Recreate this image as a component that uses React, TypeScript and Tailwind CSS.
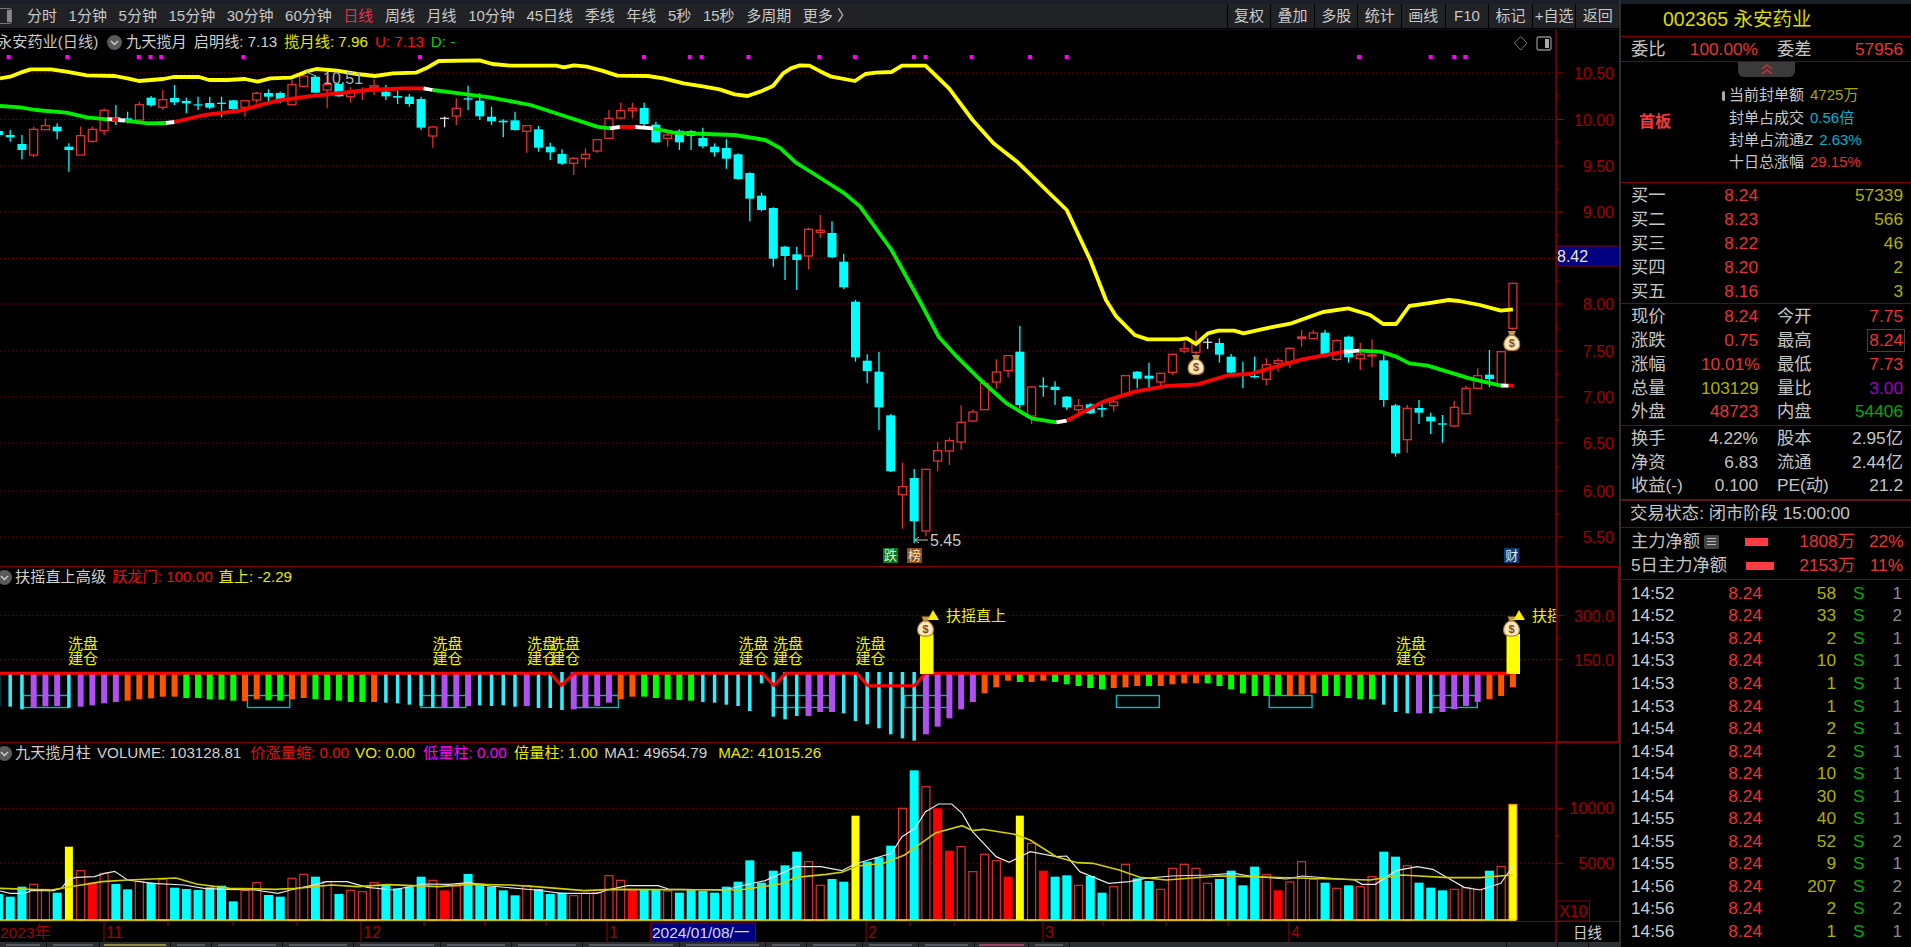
import React from 'react';

type Pt = [number, number];

// candle + volume data read off the chart: body top, body bottom, wick top, wick bottom (3x px), volume top (3x px)
const CANDLES: [string, number, number, number, number, number][] = [
  ['d', 393, 405, 385, 410, 462], ['d', 405, 412, 390, 425, 470], ['d', 432, 450, 405, 478, 440], ['u', 388, 465, 380, 472, 433],
  ['u', 377, 389, 355, 390, 448], ['d', 380, 394, 370, 418, 458], ['d', 440, 450, 430, 515, 320], ['u', 407, 465, 380, 465, 392],
  ['u', 388, 424, 380, 428, 428], ['u', 331, 392, 325, 405, 400], ['d', 352, 365, 315, 375, 432], ['d', 355, 360, 335, 370, 448],
  ['u', 314, 360, 305, 360, 425], ['d', 293, 316, 288, 320, 428], ['u', 299, 322, 270, 330, 418], ['d', 294, 307, 255, 315, 443],
  ['d', 303, 310, 293, 340, 447], ['d', 313, 316, 290, 330, 450], ['d', 309, 323, 290, 328, 442], ['d', 308, 312, 290, 352, 437],
  ['d', 301, 327, 300, 330, 484], ['u', 302, 322, 300, 350, 452], ['u', 280, 300, 275, 310, 428], ['d', 279, 290, 268, 305, 465],
  ['d', 279, 298, 275, 310, 470], ['u', 254, 314, 240, 315, 415], ['u', 228, 259, 215, 262, 403], ['d', 230, 278, 225, 280, 410],
  ['u', 254, 270, 225, 325, 425], ['d', 252, 289, 250, 290, 462], ['u', 275, 290, 262, 308, 451], ['u', 270, 273, 262, 300, 455],
  ['u', 257, 262, 238, 285, 428], ['d', 275, 289, 255, 300, 433], ['d', 288, 293, 272, 312, 445], ['d', 290, 312, 282, 320, 440],
  ['d', 297, 383, 290, 390, 410], ['u', 381, 408, 378, 443, 421], ['w', 353, 355, 350, 382, 451], ['u', 325, 348, 295, 375, 438],
  ['d', 295, 299, 257, 330, 402], ['d', 302, 349, 280, 360, 430], ['d', 350, 364, 320, 375, 440], ['d', 362, 367, 358, 412, 451],
  ['d', 361, 390, 335, 392, 466], ['u', 377, 394, 375, 458, 437], ['d', 388, 443, 378, 455, 447], ['d', 440, 457, 428, 480, 462],
  ['d', 462, 491, 448, 495, 458], ['u', 475, 490, 472, 525, 467], ['u', 463, 475, 445, 503, 460], ['u', 419, 453, 418, 458, 458],
  ['u', 355, 415, 330, 418, 407], ['u', 332, 354, 308, 358, 421], ['u', 325, 332, 308, 355, 448], ['d', 324, 372, 308, 378, 448],
  ['d', 374, 427, 365, 428, 448], ['u', 405, 415, 395, 440, 453], ['d', 392, 427, 388, 450, 458], ['d', 393, 408, 390, 450, 448],
  ['d', 414, 439, 383, 445, 453], ['d', 440, 457, 430, 470, 458], ['d', 444, 476, 418, 506, 440], ['d', 463, 537, 460, 540, 425],
  ['d', 519, 596, 517, 664, 361], ['d', 587, 630, 578, 634, 428], ['d', 624, 776, 622, 800, 392], ['d', 740, 768, 737, 840, 376],
  ['d', 763, 780, 740, 870, 335], ['u', 688, 768, 683, 808, 365], ['u', 691, 697, 645, 713, 436], ['d', 699, 772, 664, 775, 417],
  ['d', 785, 862, 762, 868, 425], ['d', 905, 1072, 900, 1085, 227], ['d', 1082, 1113, 1063, 1150, 365], ['d', 1115, 1222, 1055, 1290, 352],
  ['d', 1246, 1414, 1242, 1416, 317], ['u', 1460, 1484, 1388, 1586, 205], ['d', 1434, 1564, 1407, 1630, 91], ['u', 1408, 1593, 1408, 1608, 140],
  ['u', 1352, 1383, 1325, 1413, 205], ['u', 1322, 1353, 1313, 1395, 332], ['u', 1267, 1326, 1216, 1350, 320], ['u', 1236, 1263, 1228, 1267, 395],
  ['u', 1150, 1229, 1140, 1229, 343], ['u', 1116, 1146, 1078, 1166, 362], ['u', 1067, 1112, 1065, 1132, 410], ['d', 1055, 1215, 978, 1225, 227],
  ['u', 1161, 1248, 1158, 1272, 310], ['d', 1157, 1159, 1132, 1190, 392], ['d', 1160, 1170, 1144, 1215, 410], ['d', 1190, 1222, 1188, 1230, 406],
  ['u', 1217, 1229, 1197, 1240, 436], ['d', 1213, 1240, 1210, 1242, 408], ['d', 1224, 1229, 1212, 1252, 458], ['u', 1206, 1217, 1195, 1235, 440],
  ['u', 1127, 1185, 1125, 1190, 373], ['d', 1115, 1136, 1113, 1165, 415], ['d', 1127, 1136, 1088, 1165, 423], ['u', 1120, 1146, 1118, 1165, 448],
  ['u', 1063, 1117, 1060, 1125, 385], ['u', 1046, 1053, 1025, 1060, 373], ['u', 1030, 1057, 992, 1065, 385], ['w', 1025, 1027, 1015, 1047, 430],
  ['d', 1029, 1064, 1015, 1088, 417], ['d', 1070, 1118, 1062, 1125, 392], ['d', 1120, 1122, 1085, 1165, 436], ['d', 1128, 1132, 1070, 1135, 380],
  ['u', 1094, 1138, 1075, 1155, 404], ['u', 1082, 1090, 1075, 1115, 451], ['u', 1045, 1085, 1042, 1105, 426], ['u', 1011, 1015, 990, 1040, 365],
  ['u', 999, 1016, 990, 1018, 418], ['d', 998, 1065, 990, 1072, 428], ['u', 1022, 1078, 1018, 1082, 445], ['d', 1010, 1072, 1007, 1088, 436],
  ['u', 1063, 1076, 1028, 1110, 440], ['u', 1065, 1068, 1018, 1102, 410], ['d', 1081, 1200, 1065, 1220, 335], ['d', 1216, 1360, 1212, 1370, 350],
  ['u', 1225, 1319, 1215, 1358, 377], ['d', 1224, 1238, 1200, 1272, 428], ['d', 1250, 1264, 1238, 1302, 443], ['d', 1270, 1274, 1245, 1328, 451],
  ['u', 1222, 1278, 1202, 1280, 448], ['u', 1165, 1241, 1158, 1242, 443], ['u', 1127, 1165, 1105, 1167, 448], ['d', 1124, 1137, 1050, 1162, 392],
  ['u', 1055, 1152, 1055, 1158, 380], ['u', 850, 985, 848, 990, 193],
];

const SOLID_VOL = [8, 38, 54, 80, 81, 86, 89, 109];
const YELLOW_VOL = [6, 73, 87, 129];

// indicator bars: c cyan, p purple, o orange, g green, value is bar bottom in 3x px
const BARS: [string, number][] = [
  ['c', 440], ['c', 442], ['c', 450], ['p', 446], ['p', 441], ['p', 440], ['c', 445], ['p', 442], ['p', 438], ['p', 432], ['p', 428],
  ['o', 424], ['o', 420], ['o', 417], ['o', 412], ['o', 412], ['g', 416], ['g', 416], ['g', 420], ['g', 421], ['g', 424], ['o', 425],
  ['o', 420], ['g', 423], ['g', 424], ['o', 420], ['o', 416], ['g', 420], ['g', 422], ['g', 424], ['g', 428], ['g', 428], ['o', 428],
  ['c', 430], ['c', 432], ['c', 436], ['c', 440], ['c', 445], ['p', 446], ['p', 443], ['p', 440], ['c', 438], ['c', 440], ['c', 438],
  ['c', 442], ['p', 440], ['c', 446], ['c', 446], ['c', 452], ['p', 450], ['p', 446], ['p', 440], ['p', 430], ['o', 420], ['o', 412],
  ['g', 412], ['g', 416], ['g', 420], ['g', 422], ['g', 424], ['c', 428], ['c', 430], ['c', 436], ['c', 440], ['c', 455], ['c', 372],
  ['c', 472], ['c', 480], ['c', 470], ['p', 470], ['p', 458], ['p', 458], ['c', 462], ['c', 485], ['c', 495], ['c', 507], ['c', 525],
  ['c', 537], ['c', 544], ['p', 525], ['p', 502], ['p', 477], ['p', 450], ['p', 428], ['o', 402], ['o', 384], ['o', 364], ['g', 368],
  ['o', 368], ['o', 364], ['g', 368], ['g', 375], ['g', 380], ['g', 386], ['g', 390], ['o', 386], ['o', 384], ['o', 380], ['g', 380],
  ['o', 380], ['o', 375], ['o', 372], ['o', 372], ['g', 372], ['g', 380], ['g', 390], ['g', 402], ['g', 410], ['g', 410], ['g', 408],
  ['o', 408], ['o', 406], ['o', 402], ['g', 410], ['g', 410], ['g', 416], ['g', 420], ['g', 420], ['c', 436], ['c', 458], ['c', 462],
  ['p', 462], ['c', 462], ['p', 458], ['p', 450], ['p', 440], ['p', 428], ['o', 420], ['o', 410], ['o', 384],
];

const BAR_STYLE: Record<string, [string, number]> = {
  c: ['#33eeff', 3.5],
  p: ['#b050f0', 6],
  o: ['#ff5500', 6],
  g: ['#00ff00', 6],
};

const xOf = (i: number) => 10.2 + 11.74 * (i - 1);
const c1 = (pts: Pt[], top = 0): Pt[] => pts.map(([x, y]) => [x / 1.96, top + y / 3]);
const c2 = (pts: Pt[], top = 0): Pt[] => pts.map(([x, y]) => [800 + x / 1.912, top + y / 3]);
const poly = (pts: Pt[]) => pts.map(p => p.join(',')).join(' ');

const YELLOW_LINE: Pt[] = [
  ...c1([[0, 235], [20, 230], [40, 218], [60, 208], [100, 208], [130, 215], [170, 226], [225, 228], [250, 235], [272, 243], [320, 237], [340, 231], [390, 231], [410, 240], [445, 240], [480, 237], [505, 245], [530, 235], [570, 233], [600, 215], [620, 207], [660, 212], [700, 222], [735, 228], [770, 220], [815, 218], [835, 205], [860, 183], [940, 181], [965, 192], [1000, 197], [1090, 197], [1105, 202], [1125, 196], [1150, 200], [1180, 212], [1210, 227], [1270, 228], [1300, 235], [1340, 250], [1380, 260], [1410, 268], [1440, 283], [1465, 288], [1490, 275], [1515, 258], [1535, 220], [1550, 205], [1568, 196]]),
  ...c2([[18, 197], [40, 215], [60, 230], [105, 243], [125, 222], [145, 218], [175, 216], [195, 197], [240, 197], [285, 265], [330, 360], [370, 430], [415, 485], [510, 630], [555, 780], [585, 900]]),
  ...c2([[605, 50], [640, 105], [665, 118], [725, 118], [740, 115], [757, 132], [780, 100], [800, 92], [830, 92], [848, 100], [900, 82], [940, 70], [1000, 36], [1048, 25], [1090, 45], [1115, 72], [1140, 72], [1165, 18], [1200, 10], [1240, 0], [1260, 3], [1300, 15], [1340, 32], [1363, 28]], 300),
];

const MID_LINE: [string, Pt[]][] = [
  ['#00ee00', c1([[0, 318], [40, 322], [70, 330], [130, 338], [170, 352], [210, 358]])],
  ['#ffffff', c1([[210, 358], [220, 358]])],
  ['#ff0000', c1([[220, 358], [232, 360]])],
  ['#ffffff', c1([[232, 360], [245, 362]])],
  ['#00ee00', c1([[245, 362], [290, 370], [325, 369]])],
  ['#ffffff', c1([[325, 369], [342, 366]])],
  ['#ff0000', c1([[342, 366], [400, 345], [470, 332], [540, 303], [600, 290], [660, 280], [720, 270], [790, 265], [830, 265]])],
  ['#ffffff', c1([[830, 265], [848, 270]])],
  ['#00ee00', c1([[848, 270], [900, 280], [960, 292], [1040, 315], [1100, 345], [1170, 380], [1195, 385]])],
  ['#ffffff', c1([[1195, 385], [1215, 381]])],
  ['#ff0000', c1([[1215, 381], [1245, 381]])],
  ['#ffffff', c1([[1245, 381], [1280, 385]])],
  ['#00ee00', [...c1([[1280, 385], [1320, 398], [1380, 402], [1440, 405], [1500, 420], [1530, 445], [1560, 488]]), ...c2([[15, 510], [60, 555], [85, 580], [115, 620], [175, 750], [228, 900]]), ...c2([[265, 110], [300, 170], [345, 240], [395, 310], [443, 355], [490, 367]], 300)]],
  ['#ffffff', c2([[490, 367], [510, 362]], 300)],
  ['#ff0000', c2([[510, 362], [580, 305], [640, 275], [700, 258], [760, 253], [820, 225], [860, 222], [960, 178], [1040, 155]], 300)],
  ['#ffffff', c2([[1040, 155], [1070, 152]], 300)],
  ['#00ee00', c2([[1070, 152], [1110, 155], [1140, 170], [1165, 190], [1200, 197], [1280, 235], [1340, 257]], 300)],
  ['#ffffff', c2([[1340, 257], [1355, 257]], 300)],
  ['#ff0000', c2([[1355, 257], [1365, 257]], 300)],
];

const VOL_WHITE: Pt[] = [
  ...c1([[0, 453], [20, 460], [50, 460], [60, 452], [105, 452], [120, 445], [135, 418], [150, 412], [185, 410], [205, 400], [225, 394], [250, 420], [300, 430], [360, 435], [400, 445], [440, 448], [500, 450], [545, 460], [570, 450], [620, 433], [640, 425], [680, 425], [720, 442], [770, 450], [830, 432], [880, 433], [920, 428], [960, 438], [1050, 450], [1100, 460], [1170, 460], [1190, 450], [1230, 437], [1290, 437], [1310, 447], [1420, 450], [1460, 435], [1500, 422], [1560, 380]], 740),
  ...c2([[40, 380], [80, 392], [105, 372], [175, 340], [195, 290], [220, 265], [240, 215], [265, 192], [290, 192], [310, 220], [330, 275], [375, 350], [400, 367], [440, 335], [490, 350], [510, 348], [535, 395], [590, 430], [630, 425], [660, 415], [710, 408], [780, 405], [830, 400], [860, 408], [930, 417], [960, 408], [1060, 420], [1075, 433], [1100, 433], [1140, 392], [1180, 380], [1210, 388], [1270, 442], [1300, 450], [1340, 430], [1363, 378]], 740),
];

const VOL_YELLOW: Pt[] = [
  ...c1([[0, 445], [100, 450], [150, 437], [200, 425], [250, 420], [345, 414], [385, 432], [450, 445], [540, 448], [580, 445], [650, 435], [700, 440], [760, 434], [860, 440], [920, 433], [1000, 435], [1050, 440], [1145, 452], [1200, 448], [1450, 450], [1530, 432], [1560, 412]], 740),
  ...c2([[50, 403], [80, 397], [110, 378], [160, 370], [200, 345], [260, 278], [310, 257], [330, 272], [350, 268], [410, 283], [440, 300], [490, 350], [530, 368], [560, 370], [610, 390], [650, 412], [700, 420], [800, 408], [860, 410], [1090, 420], [1150, 405], [1240, 413], [1300, 413], [1363, 405]], 740),
];

const RED_TOP: Pt[] = [
  ...c1([[0, 340], [1078, 340], [1100, 376], [1125, 340], [1493, 340], [1517, 376], [1540, 340]], 560),
  ...c2([[108, 340], [130, 377], [218, 377], [240, 340], [1363, 340]], 560),
];

const DOTS = [...[17, 132, 272, 295, 316, 477, 823, 1262, 1352, 1375, 1467].map(x => x / 1.96), ...[37, 105, 218, 240, 328, 440, 510, 1069, 1206, 1251, 1272].map(x => 800 + x / 1.912)];
const TEAL_BOXES = [...[[45, 135], [485, 568], [825, 913], [1128, 1212], [1517, 1632]].map(([a, b]) => [a / 1.96, b / 1.96]), ...[[200, 283], [605, 687], [897, 979], [1208, 1295]].map(([a, b]) => [800 + a / 1.912, 800 + b / 1.912])];
const WASH_X = [83, 447.5, 542, 565, 753.6, 788, 870.6, 1411];
const PRICE_LABELS: [string, number][] = [['10.50', 73], ['10.00', 119.5], ['9.50', 166], ['9.00', 212], ['8.00', 304], ['7.50', 351], ['7.00', 397], ['6.50', 443], ['6.00', 491], ['5.50', 537]];

const AXIS = '#a00000';
const GRID = '#7a0000';
const BODY = "[font-family:'Liberation_Sans','Noto_Sans_CJK_SC',sans-serif]";

function MoneyBag({ x, y }: { x: number; y: number }) {
  return (
    <g transform={`translate(${x} ${y})`}>
      <path d="M-4 -10 L4 -10 L2 -5.5 L-2 -5.5 Z" fill="#c89a40" />
      <path d="M-2.5 -5.5 C-8 -2 -8.5 3 -7.5 6 C-6.5 9 -3 9.5 0 9.5 C3 9.5 6.5 9 7.5 6 C8.5 3 8 -2 2.5 -5.5 Z" fill="#f8e6bc" stroke="#b07a28" strokeWidth="1.2" />
      <text x="0" y="6" textAnchor="middle" fontSize="11" fontWeight="700" fill="#8a4a10">$</text>
    </g>
  );
}

function GridLines({ ys }: { ys: number[] }) {
  return (
    <>
      {ys.map(y => <line key={y} x1="0" x2="1556" y1={y} y2={y} stroke={GRID} strokeWidth="1" strokeDasharray="1.5 2.5" />)}
    </>
  );
}

function AxisLabels({ items }: { items: [string, number][] }) {
  return (
    <>
      {items.map(([t, y]) => (
        <g key={t}>
          <line x1="1556" x2="1563" y1={y} y2={y} stroke={AXIS} />
          <text x="1614" y={y + 6} textAnchor="end" fontSize="16" fill={AXIS}>{t}</text>
        </g>
      ))}
    </>
  );
}

function Chevron() {
  return (
    <span className="flex h-[15px] w-[15px] flex-none items-center justify-center rounded-full bg-[#5a5a5a]">
      <svg width="9" height="9" viewBox="0 0 9 9"><path d="M1 3 L4.5 6.5 L8 3" fill="none" stroke="#d0d0d0" strokeWidth="1.4" /></svg>
    </span>
  );
}

function PricePanel() {
  return (
    <div className="relative h-[536px] flex-none">
      <svg width="1620" height="536" viewBox="0 30 1620 536" className="block">
        <GridLines ys={[73, 119.5, 166, 212, 258.5, 304, 351, 397, 443, 491, 537]} />
        {DOTS.map(x => <rect key={x} x={x - 2} y="55" width="4" height="4" fill="#ff00ff" />)}
        {CANDLES.map(([k, t, b, wt, wb], i) => {
          const x = xOf(i);
          const col = k === 'u' ? '#e03030' : k === 'd' ? '#00ffff' : '#e8e8e8';
          return (
            <g key={i}>
              <line x1={x} x2={x} y1={wt / 3} y2={wb / 3} stroke={col} strokeWidth="1.3" />
              {k === 'u'
                ? <rect x={x - 4} y={t / 3} width="8" height={(b - t) / 3} fill="#000" stroke={col} strokeWidth="1.3" />
                : <rect x={x - 4.5} y={t / 3} width="9" height={Math.max((b - t) / 3, 1.2)} fill={col} />}
            </g>
          );
        })}
        <polyline points={poly(YELLOW_LINE)} fill="none" stroke="#ffff00" strokeWidth="3.8" strokeLinejoin="round" />
        {MID_LINE.map(([color, pts], i) => <polyline key={i} points={poly(pts)} fill="none" stroke={color} strokeWidth="3.8" strokeLinejoin="round" />)}
        <text x="323" y="84" fontSize="16" fill="#b0b0b0">10.51</text>
        <path d="M316 76 L306 72 M306 72 L310 69" stroke="#b0b0b0" fill="none" />
        <path d="M915 540 H928 M915 540 L919 537 M915 540 L919 543" stroke="#c0c0c0" fill="none" />
        <text x="930" y="546" fontSize="16" fill="#c8c8c8">5.45</text>
        <MoneyBag x={1196} y={365} />
        <MoneyBag x={1511.8} y={341} />
        <rect x="883" y="548" width="15" height="15" fill="#0a7a18" />
        <text x="890.5" y="560" textAnchor="middle" fontSize="13" fill="#d8f0d8">跌</text>
        <rect x="907" y="548" width="15" height="15" fill="#8a4e12" />
        <text x="914.5" y="560" textAnchor="middle" fontSize="13" fill="#f6e6c8">榜</text>
        <rect x="1504" y="548" width="15.5" height="15" fill="#123a6e" />
        <text x="1511.7" y="560" textAnchor="middle" fontSize="13" fill="#d8e6f6">财</text>
        <path d="M1520.7 36.5 L1527 43 L1520.7 50 L1514.5 43 Z" fill="none" stroke="#777" />
        <rect x="1537" y="37" width="14" height="13" rx="2" fill="none" stroke="#888" strokeWidth="1.3" />
        <rect x="1545" y="39" width="4" height="9" fill="#aaa" />
        <line x1="1556" x2="1556" y1="30" y2="566" stroke={AXIS} strokeWidth="1.3" />
        <AxisLabels items={PRICE_LABELS} />
        {[96, 142, 189, 235, 281, 328, 374, 420, 467, 514].map(y => <line key={y} x1="1556" x2="1559" y1={y} y2={y} stroke={AXIS} />)}
        <rect x="1556.5" y="246" width="63" height="20" fill="#000080" stroke="#800000" />
        <text x="1557" y="262" fontSize="16" fill="#e8e8d0">8.42</text>
      </svg>
      <div className="absolute left-[-3px] top-[3px] flex items-center text-[15.2px] leading-[18px] whitespace-nowrap">
        <span className="w-[110px] flex-none text-[#c8c8c8]">永安药业(日线)</span>
        <Chevron />
        <span className="ml-[4px] mr-[7px] text-[#d0d0d0]">九天揽月</span>
        <span className="mr-[7px] text-[#d0d0d0]">启明线: 7.13</span>
        <span className="mr-[7px] text-[#e8e800]">揽月线: 7.96</span>
        <span className="mr-[7px] text-[#ff1010]">U: 7.13</span>
        <span className="text-[#00d000]">D: -</span>
      </div>
    </div>
  );
}

function IndicatorPanel() {
  return (
    <div className="relative h-[177px] flex-none">
      <svg width="1620" height="177" viewBox="0 566 1620 177" className="block">
        <line x1="0" x2="1620" y1="566" y2="566" stroke="#800000" strokeWidth="2" />
        <line x1="0" x2="1620" y1="743" y2="743" stroke="#800000" strokeWidth="2" />
        <GridLines ys={[615.7, 659.7]} />
        {TEAL_BOXES.map(([a, b]) => {
          const w = Math.min(b, 1556) - a;
          return <rect key={a} x={a} y="695.5" width={w} height="12" fill="none" stroke="#00b8c0" strokeWidth="1.4" />;
        })}
        {BARS.map(([k, b], i) => {
          const [col, w] = BAR_STYLE[k];
          return <rect key={i} x={xOf(i) - w / 2} y="672" width={w} height={(b - 338) / 3} fill={col} />;
        })}
        <polyline points={poly(RED_TOP)} fill="none" stroke="#ff0000" strokeWidth="3" />
        {WASH_X.map(x => (
          <g key={x} fontSize="15" fill="#f0f000" textAnchor="middle">
            <text x={x} y="649">洗盘</text>
            <text x={x} y="664">建仓</text>
          </g>
        ))}
        <rect x="920" y="634" width="13.5" height="40" fill="#ffff00" />
        <rect x="1506.5" y="634" width="13.5" height="40" fill="#ffff00" />
        <MoneyBag x={925.5} y={626.6} />
        <MoneyBag x={1511.5} y={626.6} />
        <path d="M933 610 L939 620 L927.5 620 Z" fill="#ffee00" />
        <path d="M1519 610 L1525 620 L1513.5 620 Z" fill="#ffee00" />
        <text x="946" y="621" fontSize="15" fill="#f0f000">扶摇直上</text>
        <svg x="1532" y="600" width="24" height="30" viewBox="1532 600 24 30">
          <text x="1532" y="621" fontSize="15" fill="#f0f000">扶摇直上</text>
        </svg>
        <rect x="1556.5" y="567" width="62" height="175" fill="none" stroke="#8a0000" strokeWidth="1.5" />
        <AxisLabels items={[['300.0', 615.7], ['150.0', 659.7]]} />
        <line x1="1556" x2="1559" y1="638" y2="638" stroke={AXIS} />
      </svg>
      <div className="absolute left-[-3px] top-[2px] flex items-center text-[15.2px] leading-[18px] whitespace-nowrap">
        <Chevron />
        <span className="ml-[3px] mr-[6px] text-[#d0d0d0]">扶摇直上高级</span>
        <span className="mr-[6px] text-[#e81010]">跃龙门: 100.00</span>
        <span className="text-[#e8e800]">直上: -2.29</span>
      </div>
    </div>
  );
}

function VolumePanel() {
  return (
    <div className="relative h-[179px] flex-none">
      <svg width="1620" height="179" viewBox="0 743 1620 179" className="block">
        <GridLines ys={[808.3, 863.3]} />
        {CANDLES.map(([k, , , , , v], i) => {
          const x = xOf(i);
          const t = 740 + v / 3;
          if (YELLOW_VOL.includes(i)) {
            return <rect key={i} x={x - 4} y={t} width="8" height={920 - t} fill="#ffff00" stroke={i === 129 ? '#ff9000' : 'none'} />;
          }
          if (SOLID_VOL.includes(i)) return <rect key={i} x={x - 4.5} y={t} width="9" height={920 - t} fill="#ff0000" />;
          if (k === 'd') return <rect key={i} x={x - 4.5} y={t} width="9" height={920 - t} fill="#00ffff" />;
          return <rect key={i} x={x - 4} y={t} width="8" height={920 - t} fill="#000" stroke="#d83030" strokeWidth="1.2" />;
        })}
        <polyline points={poly(VOL_WHITE)} fill="none" stroke="#e8e8e8" strokeWidth="1.2" />
        <polyline points={poly(VOL_YELLOW)} fill="none" stroke="#d0d000" strokeWidth="1.6" />
        <line x1="0" x2="1516" y1="920" y2="920" stroke="#ffee00" strokeWidth="1.3" />
        <line x1="0" x2="1620" y1="921.7" y2="921.7" stroke="#800000" strokeWidth="1.5" />
        <line x1="1556" x2="1556" y1="743" y2="922" stroke={AXIS} strokeWidth="1.3" />
        <AxisLabels items={[['10000', 808.3], ['5000', 863.3]]} />
        <line x1="1556" x2="1559" y1="836" y2="836" stroke={AXIS} />
        <rect x="1556.5" y="901" width="33" height="20" fill="none" stroke="#800000" />
        <text x="1559" y="917" fontSize="16" fill={AXIS}>X10</text>
      </svg>
      <div className="absolute left-[-3px] top-[1px] flex items-center text-[15.2px] leading-[18px] whitespace-nowrap">
        <Chevron />
        <span className="ml-[3px] mr-[6px] text-[#d0d0d0]">九天揽月柱</span>
        <span className="mr-[9px] text-[#d0d0d0]">VOLUME: 103128.81</span>
        <span className="mr-[6px] text-[#e81010]">价涨量缩: 0.00</span>
        <span className="mr-[8px] text-[#e8e800]">VO: 0.00</span>
        <span className="mr-[7.5px] text-[#ff00ff]">低量柱: 0.00</span>
        <span className="mr-[6.5px] text-[#e8e800]">倍量柱: 1.00</span>
        <span className="mr-[11px] text-[#d0d0d0]">MA1: 49654.79</span>
        <span className="text-[#e8e800]">MA2: 41015.26</span>
      </div>
    </div>
  );
}

function TimeAxis() {
  const majors: [string, number][] = [['11', 104], ['12', 361], ['1', 607], ['2', 866], ['3', 1043], ['4', 1289]];
  return (
    <div className="relative h-[20px] flex-none">
      <svg width="1620" height="20" viewBox="0 922 1620 20" className="block">
        {[168, 233, 297, 424, 485, 546, 910, 954, 1103, 1166, 1228].map(x => <line key={x} x1={x} x2={x} y1="922" y2="926" stroke={AXIS} />)}
        {majors.map(([t, x]) => (
          <g key={t}>
            <line x1={x} x2={x} y1="922" y2="942" stroke={AXIS} />
            <text x={x + 2} y="938" fontSize="16" fill={AXIS}>{t}</text>
          </g>
        ))}
        <text x="0" y="938" fontSize="15.5" fill={AXIS}>2023年</text>
        <line x1="1556" x2="1556" y1="922" y2="942" stroke={AXIS} strokeWidth="1.3" />
        <rect x="650.5" y="923" width="105" height="19" fill="#000080" stroke="#800000" />
        <text x="652" y="938" fontSize="15.5" fill="#d8d8e8">2024/01/08/一</text>
        <text x="1573" y="938" fontSize="14.5" fill="#d0d0d0">日线</text>
      </svg>
    </div>
  );
}

const LEFT_TABS = [46, 52, 70, 40, 70, 70, 86, 70, 70, 96, 85, 40, 55, 55, 55, 53, 40];
function BottomTabs() {
  return (
    <div className="flex h-[5px] flex-none gap-[1px] overflow-hidden bg-[#111]">
      {LEFT_TABS.map((w, i) => (
        <div key={i} className="flex-none bg-[#2c2e32]" style={{ width: w }}>
          <div className={i === 2 ? 'mx-[4px] mt-[2px] h-[2px] bg-[#8a8a40]' : i === 15 ? 'mx-[4px] mt-[2px] h-[2px] bg-[#a04060]' : 'mx-[6px] mt-[2px] h-[2px] bg-[#55585c]'} />
        </div>
      ))}
      <div className="flex-1 bg-[#2c2e32]" />
      <div className="w-[50px] flex-none bg-[#2c2e32]" />
      <div className="w-[30px] flex-none bg-[#2c2e32]" />
      <div className="w-[30px] flex-none bg-[#2c2e32]" />
    </div>
  );
}

const LEFT_ITEMS = ['分时', '1分钟', '5分钟', '15分钟', '30分钟', '60分钟', '日线', '周线', '月线', '10分钟', '45日线', '季线', '年线', '5秒', '15秒', '多周期', '更多 〉'];
const RIGHT_ITEMS = ['复权', '叠加', '多股', '统计', '画线', 'F10', '标记', '+自选', '返回'];

function Toolbar() {
  return (
    <div className="flex h-[30px] flex-none flex-col bg-[#111]">
      <div className="h-[4px] flex-none bg-[#1a1e26]" />
      <div className="flex h-[25px] flex-none items-center border-b border-[#000] bg-[#202225] text-[15px] text-[#c8c8c8]">
        <span className="mr-[15px] flex h-[16px] w-[12px] items-center justify-end rounded-r-[3px] border border-l-0 border-[#777]">
          <span className="h-[12px] w-[4px] bg-[#888]" />
        </span>
        <div className="flex items-center gap-[11.6px] whitespace-nowrap">
          {LEFT_ITEMS.map(t => <span key={t} className={t === '日线' ? 'text-[#e0304a]' : ''}>{t}</span>)}
        </div>
        <div className="ml-auto flex h-full">
          {RIGHT_ITEMS.map(t => (
            <span key={t} className="flex w-[43.6px] flex-none items-center justify-center whitespace-nowrap border-l border-[#000]">{t}</span>
          ))}
        </div>
      </div>
    </div>
  );
}

const RED = 'text-[#e83434]';
const OLIVE = 'text-[#b0b000]';
const GRAY = 'text-[#c4c4c4]';
const GREEN = 'text-[#00aa00]';

function QuoteRow({ a, av, ac = RED, b, bv, bc = RED, boxed }: { a: string; av: string; ac?: string; b: string; bv: string; bc?: string; boxed?: boolean }) {
  return (
    <div className="flex h-[23.8px] flex-none items-center pl-[10px] pr-[8px]">
      <span className={`w-[70px] flex-none ${GRAY}`}>{a}</span>
      <span className={`w-[57px] flex-none whitespace-nowrap text-right ${ac}`}>{av}</span>
      <span className={`ml-[19px] flex-none ${GRAY}`}>{b}</span>
      <span className={`ml-auto flex-none whitespace-nowrap ${bc} ${boxed ? 'mr-[-2px] border border-[#444] px-[1px] leading-[21px]' : ''}`}>{bv}</span>
    </div>
  );
}

function BidRow({ a, p, v }: { a: string; p: string; v: string }) {
  return (
    <div className="flex h-[23.8px] flex-none items-center pl-[10px] pr-[8px]">
      <span className={`w-[70px] flex-none ${GRAY}`}>{a}</span>
      <span className={`w-[57px] flex-none text-right ${RED}`}>{p}</span>
      <span className={`ml-auto ${OLIVE}`}>{v}</span>
    </div>
  );
}

const TICKS: [string, string, string][] = [
  ['14:52', '58', '1'], ['14:52', '33', '2'], ['14:53', '2', '1'], ['14:53', '10', '1'], ['14:53', '1', '1'], ['14:53', '1', '1'],
  ['14:54', '2', '1'], ['14:54', '2', '1'], ['14:54', '10', '1'], ['14:54', '30', '1'], ['14:55', '40', '1'], ['14:55', '52', '2'],
  ['14:55', '9', '1'], ['14:56', '207', '2'], ['14:56', '2', '2'], ['14:56', '1', '1'], ['15:00', '107', '17'],
];

const SEAL_ROWS: [string, string, string][] = [
  ['当前封单额', '4725万', 'text-[#a8a800]'],
  ['封单占成交', '0.56倍', 'text-[#00b0d0]'],
  ['封单占流通Z', '2.63%', 'text-[#00b0d0]'],
  ['十日总涨幅', '29.15%', 'text-[#e03030]'],
];

function SidePanel() {
  return (
    <div className="flex h-[947px] min-w-0 flex-1 flex-col overflow-hidden border-l-2 border-[#2e2e2e] text-[17.3px]">
      <div className="h-[4px] flex-none bg-[#1a1e26]" />
      <div className="flex h-[33px] flex-none items-center border-b-[1.5px] border-[#800000] pl-[42px] text-[19.5px] text-[#dcdc00]">002365 永安药业</div>
      <div className="flex h-[25px] flex-none items-center border-b-[1.5px] border-[#800000] pl-[10px] pr-[8px] pt-[1px]">
        <span className={`w-[55px] flex-none ${GRAY}`}>委比</span>
        <span className={`w-[72px] flex-none text-right ${RED}`}>100.00%</span>
        <span className={`ml-[19px] ${GRAY}`}>委差</span>
        <span className={`ml-auto ${RED}`}>57956</span>
      </div>
      <div className="relative flex h-[121px] flex-none items-center border-b-[1.5px] border-[#800000]">
        <div className="absolute left-[117px] top-0 flex h-[15px] w-[57px] items-center justify-center rounded-b-[6px] bg-[#3a3a3a]">
          <svg width="14" height="11" viewBox="0 0 14 11"><path d="M2 5 L7 1 L12 5 M2 10 L7 6 L12 10" fill="none" stroke="#d83030" strokeWidth="1.4" /></svg>
        </div>
        <span className="ml-[18px] w-[90px] flex-none text-[16px] font-bold text-[#f03a3a]">首板</span>
        <div className="flex flex-col pt-[14px] text-[15px] leading-[22.4px]">
          {SEAL_ROWS.map(([l, v, c], i) => (
            <div key={l} className="relative flex whitespace-nowrap">
              {i === 0 && <span className="absolute left-[-7px] top-[7px] h-[10px] w-[3px] rounded-full bg-[#aaa]" />}
              <span className="text-[#c8c8c8]">{l}</span>
              <span className={`ml-[6px] ${c}`}>{v}</span>
            </div>
          ))}
        </div>
      </div>
      <div className="flex h-[121px] flex-none flex-col justify-center border-b-[1.5px] border-[#800000] pt-[2px]">
        <BidRow a="买一" p="8.24" v="57339" />
        <BidRow a="买二" p="8.23" v="566" />
        <BidRow a="买三" p="8.22" v="46" />
        <BidRow a="买四" p="8.20" v="2" />
        <BidRow a="买五" p="8.16" v="3" />
      </div>
      <div className="flex h-[121.5px] flex-none flex-col justify-center border-b-[1.5px] border-[#800000] pt-[1px]">
        <QuoteRow a="现价" av="8.24" b="今开" bv="7.75" />
        <QuoteRow a="涨跌" av="0.75" b="最高" bv="8.24" boxed />
        <QuoteRow a="涨幅" av="10.01%" b="最低" bv="7.73" />
        <QuoteRow a="总量" av="103129" ac={OLIVE} b="量比" bv="3.00" bc="text-[#a000c0]" />
        <QuoteRow a="外盘" av="48723" b="内盘" bv="54406" bc={GREEN} />
      </div>
      <div className="flex h-[75px] flex-none flex-col justify-center border-b-[2px] border-[#5a1818] pt-[1px]">
        <QuoteRow a="换手" av="4.22%" ac={GRAY} b="股本" bv="2.95亿" bc={GRAY} />
        <QuoteRow a="净资" av="6.83" ac={GRAY} b="流通" bv="2.44亿" bc={GRAY} />
        <QuoteRow a="收益(-)" av="0.100" ac={GRAY} b="PE(动)" bv="21.2" bc={GRAY} />
      </div>
      <div className={`flex h-[27px] flex-none items-center border-b-[1.5px] border-[#800000] pl-[9px] pt-[1px] ${GRAY}`}>交易状态: 闭市阶段 15:00:00</div>
      <div className="flex h-[52px] flex-none flex-col justify-center border-b-[1.5px] border-[#800000] pr-[8px] pt-[1px]">
        <div className="flex h-[24px] items-center pl-[10px]">
          <span className={GRAY}>主力净额</span>
          <span className="ml-[4px] flex h-[14px] w-[15px] flex-col justify-center gap-[2px] rounded-[2px] bg-[#444] px-[3px]">
            <span className="h-[1px] bg-[#bbb]" /><span className="h-[1px] bg-[#bbb]" /><span className="h-[1px] bg-[#bbb]" />
          </span>
          <span className="ml-[26px] h-[8px] w-[23px] bg-[#ff3c46]" />
          <span className={`ml-auto ${RED}`}>1808万</span>
          <span className={`ml-[14px] w-[34px] text-right ${RED}`}>22%</span>
        </div>
        <div className="flex h-[24px] items-center pl-[10px]">
          <span className={`${GRAY} w-[115px] flex-none whitespace-nowrap`}>5日主力净额</span>
          <span className="h-[8px] w-[28px] bg-[#ff3c46]" />
          <span className={`ml-auto ${RED}`}>2153万</span>
          <span className={`ml-[14px] w-[34px] text-right ${RED}`}>11%</span>
        </div>
      </div>
      <div className="flex flex-col pt-[3px]">
        {TICKS.map(([t, v, n], i) => (
          <div key={i} className="flex h-[22.55px] flex-none items-center pl-[10px] pr-[9px]">
            <span className="w-[42px] flex-none text-[#c8ccd0]">{t}</span>
            <span className={`w-[89px] flex-none text-right ${RED}`}>8.24</span>
            <span className={`w-[74px] flex-none text-right ${OLIVE}`}>{v}</span>
            <span className={`ml-[17px] flex-none ${GREEN}`}>S</span>
            <span className="ml-auto text-[#8a8a8a]">{n}</span>
          </div>
        ))}
      </div>
    </div>
  );
}

export default function App() {
  return (
    <div className={`flex h-[947px] w-[1911px] overflow-hidden bg-black ${BODY}`}>
      <div className="flex w-[1619px] flex-none flex-col overflow-hidden">
        <Toolbar />
        <PricePanel />
        <IndicatorPanel />
        <VolumePanel />
        <TimeAxis />
        <BottomTabs />
      </div>
      <SidePanel />
    </div>
  );
}
